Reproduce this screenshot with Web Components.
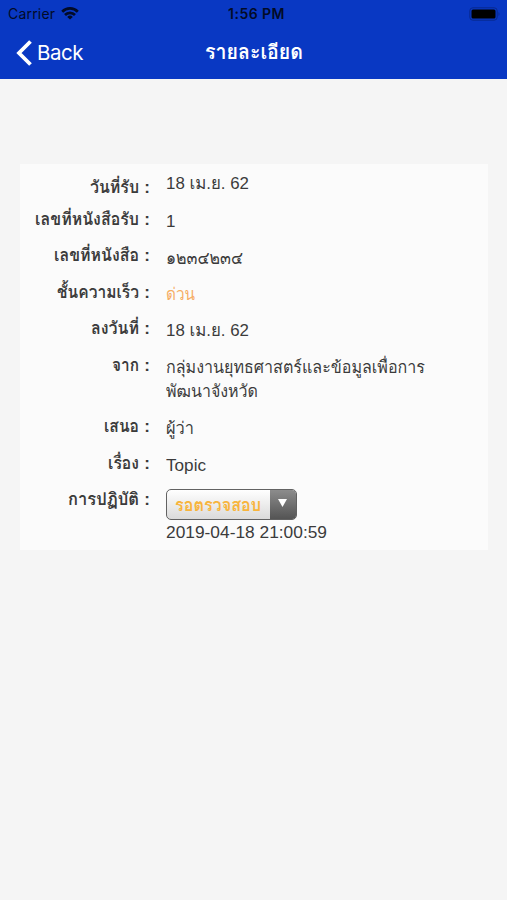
<!DOCTYPE html>
<html lang="th">
<head>
<meta charset="utf-8">
<meta name="viewport" content="width=device-width, initial-scale=1">
<title>รายละเอียด</title>
<style>
	body {
		margin: 0;
		min-height: 900px;
		background: #f5f5f5;
		color: #3b3b3b;
		font: 17px/24.4px "Liberation Sans", Thonburi, Loma, Garuda, "Noto Sans Thai Looped", sans-serif;
	}
</style>
</head>
<body>
<nav-header>
	<status-bar slot="status" carrier="Carrier" time="1:56 PM"></status-bar>
	<span slot="back">Back</span>
	<fit-text slot="title" width="98">รายละเอียด</fit-text>
</nav-header>
<detail-card>
	<detail-row style="--label-shift: 4px; margin-bottom: 1px"><fit-text slot="label" width="49">วันที่รับ</fit-text><fit-text width="83">18 เม.ย. 62</fit-text></detail-row>
	<detail-row><fit-text slot="label" width="104">เลขที่หนังสือรับ</fit-text>1</detail-row>
	<detail-row><fit-text slot="label" width="85">เลขที่หนังสือ</fit-text><fit-text width="77" style="font-size: 18px">๑๒๓๔๒๓๔</fit-text></detail-row>
	<detail-row><fit-text slot="label" width="82">ชั้นความเร็ว</fit-text><fit-text width="29" style="color: #f6ad65">ด่วน</fit-text></detail-row>
	<detail-row><fit-text slot="label" width="48">ลงวันที่</fit-text><fit-text width="83">18 เม.ย. 62</fit-text></detail-row>
	<detail-row><fit-text slot="label" width="27">จาก</fit-text><fit-text width="259">กลุ่มงานยุทธศาสตร์และข้อมูลเพื่อการ</fit-text><fit-text width="92">พัฒนาจังหวัด</fit-text></detail-row>
	<detail-row><fit-text slot="label" width="35">เสนอ</fit-text><fit-text width="28">ผู้ว่า</fit-text></detail-row>
	<detail-row><fit-text slot="label" width="31">เรื่อง</fit-text><fit-text width="40">Topic</fit-text></detail-row>
	<detail-row><fit-text slot="label" width="71">การปฏิบัติ</fit-text><status-select><fit-text width="86">รอตรวจสอบ</fit-text></status-select><fit-text width="161">2019-04-18 21:00:59</fit-text></detail-row>
</detail-card>

<script>
class StatusBar extends HTMLElement {
	constructor() {
		super();
		this.attachShadow({ mode: 'open' });
		this.shadowRoot.innerHTML = `
			<style>
				:host {
					display: grid;
					grid-template-columns: 1fr auto 1fr;
					align-items: center;
					height: 27px;
					padding: 0 4px 0 8px;
					color: #020b27;
					font: 14px/20px Inter, sans-serif;
				}
				.carrier {
					display: flex;
					align-items: center;
					gap: 6px;
				}
				.name {
					letter-spacing: 0.2px;
				}
				.time {
					padding-left: 2px;
					font-size: 14px;
					font-weight: 600;
					letter-spacing: 0.45px;
				}
				.battery {
					justify-self: end;
				}
				svg {
					display: block;
				}
			</style>
			<div class="carrier">
				<span class="name"></span>
				<svg width="18" height="13" viewBox="0 0 18 13" fill="none" stroke="currentColor" stroke-width="2.7">
					<path d="M1.2 4.7a11 11 0 0 1 15.6 0M4 8a7 7 0 0 1 10 0"/>
					<path d="M9 12.6 6.2 9.9a4 4 0 0 1 5.6 0z" fill="currentColor" stroke="none"/>
				</svg>
			</div>
			<span class="time"></span>
			<svg class="battery" width="34" height="14" viewBox="0 0 34 14">
				<rect x=".8" y=".8" width="27.4" height="12.4" rx="3" fill="none" stroke="#08298f"/>
				<rect x="2.5" y="2.5" width="24" height="9" rx="1.5" fill="#000"/>
				<path d="M29.5 5v4q2-2 0-4" fill="#08298f"/>
			</svg>
		`;
	}

	connectedCallback() {
		this.shadowRoot.querySelector('.name').textContent = this.getAttribute('carrier');
		this.shadowRoot.querySelector('.time').textContent = this.getAttribute('time');
	}
}

class NavHeader extends HTMLElement {
	constructor() {
		super();
		this.attachShadow({ mode: 'open' });
		this.shadowRoot.innerHTML = `
			<style>
				:host {
					display: block;
					box-sizing: border-box;
					height: 79px;
					background: #0938c3;
					color: #fff;
				}
				.bar {
					display: grid;
					grid-template-columns: 1fr auto 1fr;
					align-items: center;
					height: 51px;
					padding: 0 16px;
				}
				.back {
					display: flex;
					align-items: center;
					gap: 5px;
					font: 20.5px/24px Inter, sans-serif;
					letter-spacing: -0.5px;
				}
				.title {
					font-size: 20px;
					font-weight: bold;
				}
			</style>
			<slot name="status"></slot>
			<div class="bar">
				<div class="back">
					<svg width="16" height="26" viewBox="0 0 16 26" fill="none" stroke="currentColor" stroke-width="3.8">
						<path d="M14.5 1.5 3 13l11.5 11.5"/>
					</svg>
					<slot name="back"></slot>
				</div>
				<div class="title"><slot name="title"></slot></div>
			</div>
		`;
	}
}

class DetailCard extends HTMLElement {
	constructor() {
		super();
		this.attachShadow({ mode: 'open' });
		this.shadowRoot.innerHTML = `
			<style>
				:host {
					display: flex;
					flex-direction: column;
					gap: 12.2px;
					box-sizing: border-box;
					height: 386px;
					margin: 85px 19px 0 20px;
					padding-top: 8px;
					background: #fbfbfb;
				}
			</style>
			<slot></slot>
		`;
	}
}

class DetailRow extends HTMLElement {
	constructor() {
		super();
		this.attachShadow({ mode: 'open' });
		this.shadowRoot.innerHTML = `
			<style>
				:host {
					display: grid;
					grid-template-columns: 130px 1fr;
					column-gap: 16px;
				}
				.label {
					display: flex;
					justify-content: flex-end;
					gap: 5px;
					height: 24.4px;
					margin: var(--label-shift, -2px) 0 calc(0px - var(--label-shift, -2px));
					font-weight: bold;
				}
			</style>
			<div class="label"><slot name="label"></slot><span>:</span></div>
			<div class="value"><slot></slot></div>
		`;
	}
}

class StatusSelect extends HTMLElement {
	constructor() {
		super();
		this.attachShadow({ mode: 'open' });
		this.shadowRoot.innerHTML = `
			<style>
				:host {
					display: flex;
					box-sizing: border-box;
					width: 131px;
					height: 31px;
					margin: -1px 0 1px;
					border: 1px solid #626262;
					border-radius: 5px;
					overflow: hidden;
					background: linear-gradient(#fff, #dadada);
					color: #f8b43c;
					font-weight: bold;
					line-height: 32px;
				}
				.text {
					flex: 1;
					padding-left: 8px;
				}
				.arrow {
					display: grid;
					place-items: center;
					width: 26px;
					background: linear-gradient(#8c8c8c, #545454);
				}
				svg {
					margin: -3px 2px 0 0;
				}
			</style>
			<div class="text"><slot></slot></div>
			<div class="arrow">
				<svg width="9" height="8" viewBox="0 0 9 8" fill="#fff"><path d="M0 0h9L4.5 8z"/></svg>
			</div>
		`;
	}
}

// Single line of text, stretched or condensed to a given width
class FitText extends HTMLElement {
	constructor() {
		super();
		this.attachShadow({ mode: 'open' });
		this.shadowRoot.innerHTML = `
			<style>
				:host {
					display: block;
					white-space: nowrap;
				}
				span {
					display: inline-block;
					transform-origin: 0 50%;
				}
			</style>
			<span><slot></slot></span>
		`;
	}

	connectedCallback() {
		const width = Number(this.getAttribute('width'));
		const span = this.shadowRoot.querySelector('span');
		this.style.width = `${width}px`;
		span.style.transform = `scaleX(${width / span.getBoundingClientRect().width})`;
	}
}

window.customElements.define('status-bar', StatusBar);
window.customElements.define('nav-header', NavHeader);
window.customElements.define('detail-card', DetailCard);
window.customElements.define('detail-row', DetailRow);
window.customElements.define('status-select', StatusSelect);
// Measures its own text, so the parents that set its font come first
window.customElements.define('fit-text', FitText);
</script>
</body>
</html>
